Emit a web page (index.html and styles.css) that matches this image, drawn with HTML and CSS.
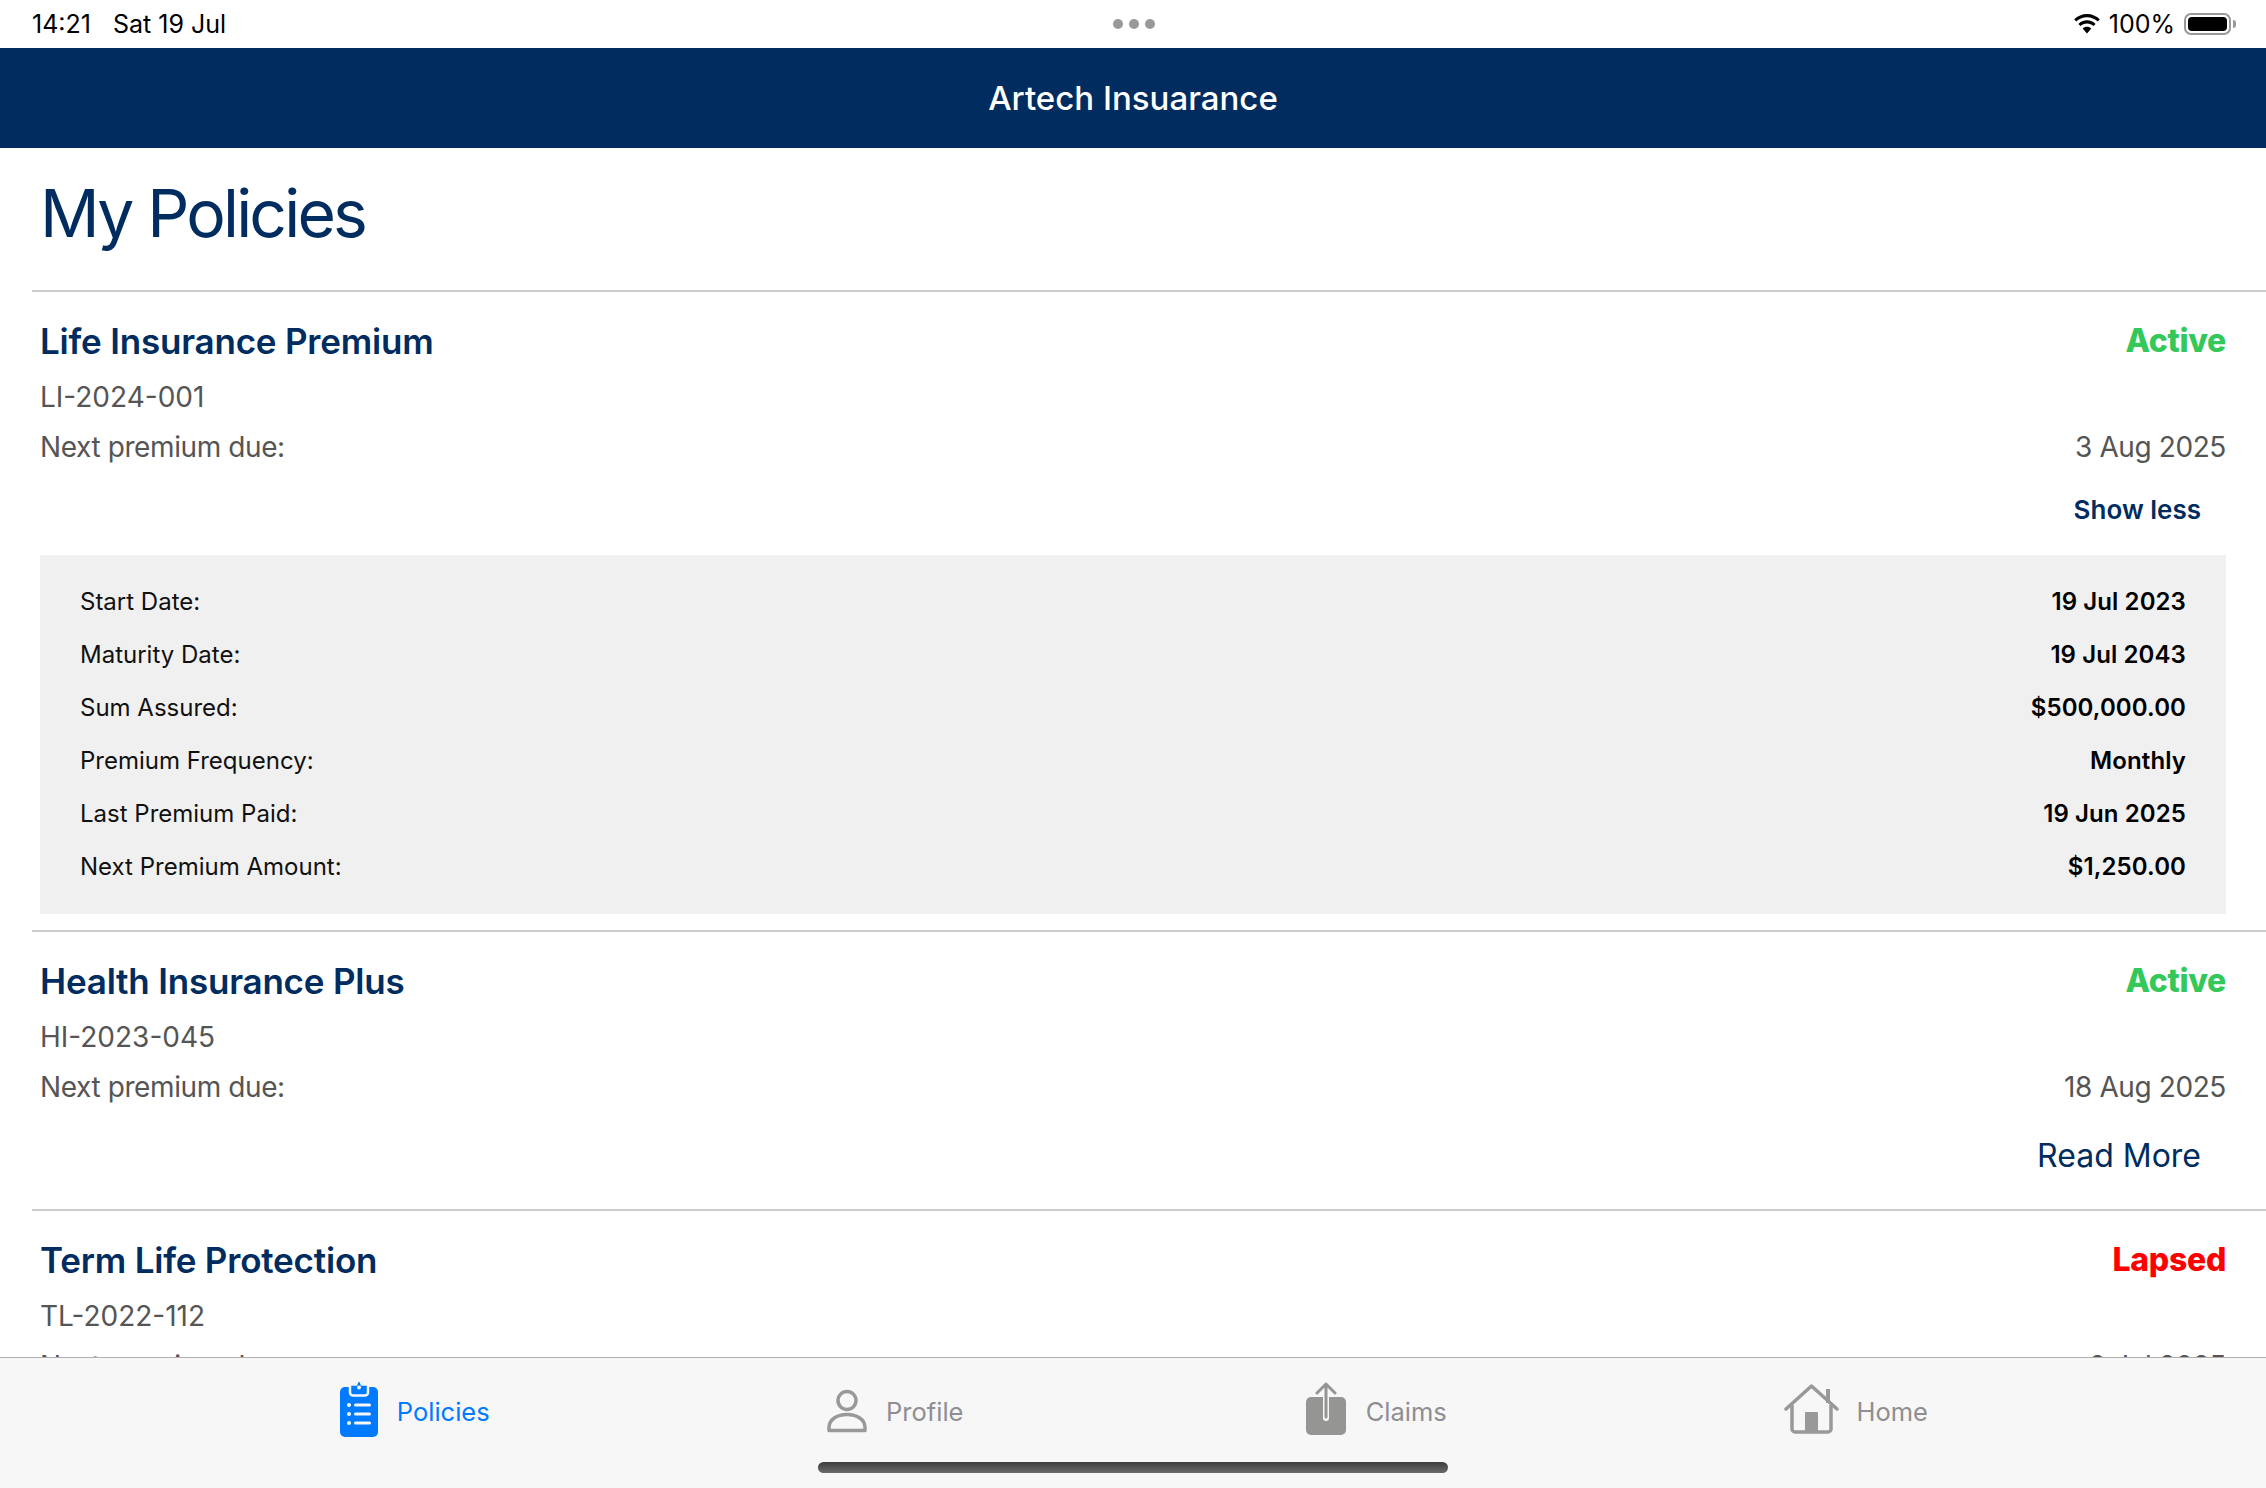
FILE: index.html
```html
<!DOCTYPE html>
<html lang="en">
<head>
  <meta charset="UTF-8">
  <title>My Policies</title>
  <link rel="stylesheet" href="styles.css">
</head>
<body>
  <div class="app">
    <div class="status-bar">
      <div class="status-left"><span>14:21</span><span>Sat 19 Jul</span></div>
      <div class="status-dots"><i></i><i></i><i></i></div>
      <div class="status-right">
        <svg class="wifi" width="28" height="20" viewBox="0 0 28 20">
          <path d="M14 3.200c4.200 0 8 1.600 10.800 4.300l2-2.200C23.400 2 18.900 0 14 0S4.600 2 1.200 5.300l2 2.200C6 4.800 9.800 3.200 14 3.200z"/>
          <path d="M14 9.500c2.500 0 4.800 1 6.500 2.600l2.100-2.200C20.300 7.700 17.300 6.300 14 6.300S7.700 7.700 5.400 9.900l2.100 2.200C9.200 10.500 11.500 9.500 14 9.500z"/>
          <path d="M14 12.700c-1.700 0-3.200.7-4.300 1.700L14 19.500l4.300-5.100c-1.100-1-2.600-1.700-4.300-1.700z"/>
        </svg>
        <span>100%</span>
        <div class="battery"><div class="battery-fill"></div></div>
        <div class="battery-nub"></div>
      </div>
    </div>

    <div class="app-header">Artech Insuarance</div>

    <div class="content">
      <h1 class="page-title">My Policies</h1>

      <div class="policy expanded">
        <div class="policy-row">
          <span class="policy-name">Life Insurance Premium</span>
          <span class="policy-status active">Active</span>
        </div>
        <div class="policy-id">LI-2024-001</div>
        <div class="policy-row policy-due">
          <span>Next premium due:</span>
          <span>3 Aug 2025</span>
        </div>
        <div class="toggle-row"><a class="show-less">Show less</a></div>
        <div class="details">
          <div class="detail-row"><span>Start Date:</span><b>19 Jul 2023</b></div>
          <div class="detail-row"><span>Maturity Date:</span><b>19 Jul 2043</b></div>
          <div class="detail-row"><span>Sum Assured:</span><b>$500,000.00</b></div>
          <div class="detail-row"><span>Premium Frequency:</span><b>Monthly</b></div>
          <div class="detail-row"><span>Last Premium Paid:</span><b>19 Jun 2025</b></div>
          <div class="detail-row"><span>Next Premium Amount:</span><b>$1,250.00</b></div>
        </div>
      </div>

      <div class="policy">
        <div class="policy-row">
          <span class="policy-name">Health Insurance Plus</span>
          <span class="policy-status active">Active</span>
        </div>
        <div class="policy-id">HI-2023-045</div>
        <div class="policy-row policy-due">
          <span>Next premium due:</span>
          <span>18 Aug 2025</span>
        </div>
        <div class="toggle-row"><a class="read-more">Read More</a></div>
      </div>

      <div class="policy">
        <div class="policy-row">
          <span class="policy-name">Term Life Protection</span>
          <span class="policy-status lapsed">Lapsed</span>
        </div>
        <div class="policy-id">TL-2022-112</div>
        <div class="policy-row policy-due">
          <span>Next premium due:</span>
          <span>2 Jul 2025</span>
        </div>
      </div>
    </div>

    <div class="tab-bar">
      <div class="tab selected">
        <svg width="40" height="56" viewBox="0 0 40 56">
          <rect x="1" y="6" width="38" height="50" rx="5" fill="#007aff"/>
          <path d="M11 3.500h18v8a3 3 0 0 1-3 3H14a3 3 0 0 1-3-3z" fill="#007aff" stroke="#f7f7f7" stroke-width="2.500"/>
          <path d="M13 6h5c.5-3 1-5 2-5s1.500 2 2 5h5v5H13z" fill="#007aff"/>
          <circle cx="20" cy="6.500" r="2" fill="#f7f7f7"/>
          <g fill="#f7f7f7">
            <circle cx="10" cy="24" r="2"/><rect x="15" y="22.500" width="17" height="3" rx="1.500"/>
            <circle cx="10" cy="33" r="2"/><rect x="15" y="31.500" width="17" height="3" rx="1.500"/>
            <circle cx="10" cy="42" r="2"/><rect x="15" y="40.500" width="17" height="3" rx="1.500"/>
          </g>
        </svg>
        <span>Policies</span>
      </div>
      <div class="tab tab-profile">
        <svg width="42" height="44" viewBox="0 0 42 44">
          <circle cx="21" cy="11.500" r="9" fill="none" stroke="#999" stroke-width="3.500"/>
          <path d="M3 41.500v-3c0-8 8-13 18-13s18 5 18 13v3z" fill="none" stroke="#999" stroke-width="3.500" stroke-linejoin="round"/>
        </svg>
        <span>Profile</span>
      </div>
      <div class="tab">
        <svg width="44" height="54" viewBox="0 0 44 54">
          <rect x="2" y="15" width="40" height="38" rx="5" fill="#959694"/>
          <path d="M22 36V3" stroke="#f7f7f7" stroke-width="6" stroke-linecap="round"/>
          <path d="M22 35V2M13 11l9-9 9 9" fill="none" stroke="#959694" stroke-width="3" stroke-linecap="round" stroke-linejoin="round"/>
        </svg>
        <span>Claims</span>
      </div>
      <div class="tab">
        <svg width="55" height="50" viewBox="0 0 55 50">
          <path d="M2 25L27.500 2 53 25" fill="none" stroke="#999" stroke-width="3.500" stroke-linecap="round" stroke-linejoin="round"/>
          <path d="M8 21v24a3 3 0 0 0 3 3h33a3 3 0 0 0 3-3V21" fill="none" stroke="#999" stroke-width="3.500"/>
          <rect x="21" y="28" width="13" height="20" rx="1" fill="#999"/>
          <rect x="42" y="5" width="4" height="14" fill="#999"/>
        </svg>
        <span>Home</span>
      </div>
      <div class="home-indicator"></div>
    </div>
  </div>
</body>
</html>
```

FILE: styles.css
```css
body {
  margin: 0;
  font-family: Inter, "Liberation Sans", sans-serif;
  background: #fff;
}

.app {
  display: flex;
  flex-direction: column;
  height: 100vh;
  overflow: hidden;
}

/* status bar */
.status-bar {
  flex: none;
  height: 48px;
  padding: 0 30px 0 32px;
  display: grid;
  grid-template-columns: 1fr auto 1fr;
  align-items: center;
  font-size: 25px;
  color: #000;
}

.status-left {
  display: flex;
  gap: 22px;
}

.status-dots {
  display: flex;
  gap: 6px;
}

.status-dots i {
  width: 10px;
  height: 10px;
  border-radius: 50%;
  background: #999;
}

.status-right {
  display: flex;
  align-items: center;
  justify-content: flex-end;
}

.wifi {
  margin-right: 8px;
}

.battery {
  width: 47px;
  height: 22px;
  margin-left: 9px;
  box-sizing: border-box;
  border: 2px solid #999;
  border-radius: 7px;
  padding: 2px;
}

.battery-fill {
  height: 100%;
  background: #000;
  border-radius: 4px;
}

.battery-nub {
  width: 3px;
  height: 8px;
  margin-left: 2px;
  background: #999;
  border-radius: 0 3px 3px 0;
}

/* header */
.app-header {
  flex: none;
  height: 100px;
  background: #002c5f;
  color: #fff;
  display: flex;
  align-items: center;
  justify-content: center;
  font-size: 33px;
  font-weight: 500;
}

/* list */
.content {
  flex: 1;
  min-height: 0;
  overflow: hidden;
}

.page-title {
  margin: 0 0 0 32px;
  height: 144px;
  box-sizing: border-box;
  padding: 26px 0 0 8px;
  border-bottom: 2px solid #ccc;
  color: #002c5f;
  font-size: 66px;
  letter-spacing: -2.8px;
  line-height: 78px;
  font-weight: 400;
}

.policy {
  margin-left: 32px;
  padding: 29px 40px 15px 8px;
  border-bottom: 2px solid #ccc;
}

.policy.expanded {
  padding-bottom: 16px;
}

.policy-row {
  display: flex;
  justify-content: space-between;
  align-items: center;
}

.policy-name {
  font-size: 35px;
  letter-spacing: -0.2px;
  line-height: 40px;
  font-weight: 600;
  color: #002c5f;
}

.policy-status {
  font-size: 32px;
  letter-spacing: -0.3px;
  line-height: 40px;
  font-weight: 800;
}

.active {
  color: #34c759;
}

.lapsed {
  color: #ff0000;
}

.policy-id {
  margin-top: 16px;
  font-size: 28px;
  line-height: 40px;
  color: #555;
}

.policy-due {
  margin-top: 10px;
  font-size: 28px;
  letter-spacing: -0.4px;
  line-height: 40px;
  color: #555;
}

.toggle-row {
  margin-top: 26px;
  padding-right: 25px;
  text-align: right;
  color: #002c5f;
}

.show-less {
  display: block;
  font-size: 26px;
  line-height: 34px;
  font-weight: 600;
  margin-bottom: 28px;
}

.read-more {
  display: block;
  font-size: 32px;
  line-height: 46px;
  margin-top: 2px;
  margin-bottom: 15px;
}

.details {
  background: #f0f0f0;
  padding: 20px 40px 21px;
}

.detail-row {
  display: flex;
  justify-content: space-between;
  align-items: center;
  height: 53px;
  font-size: 24px;
  color: #111;
}

.detail-row b {
  font-weight: 600;
  letter-spacing: 0.1px;
  color: #000;
}

/* bottom tabs */
.tab-bar {
  flex: none;
  position: relative;
  height: 130px;
  padding: 0 170px 0 174px;
  background: #f7f7f7;
  border-top: 1px solid #b0b0b0;
  display: grid;
  grid-template-columns: repeat(4, 1fr);
}

.tab {
  display: flex;
  align-items: center;
  justify-content: center;
  gap: 18px;
  height: 106px;
  font-size: 25.5px;
  color: #8e8e93;
}

.tab svg {
  margin-bottom: 4px;
}

.tab-profile svg {
  margin-bottom: 1px;
}

.tab.selected {
  color: #007aff;
}

.home-indicator {
  position: absolute;
  left: 818px;
  top: 104px;
  width: 630px;
  height: 11px;
  border-radius: 6px;
  background: linear-gradient(#3c3c3c, #6a6a6a);
}
```
